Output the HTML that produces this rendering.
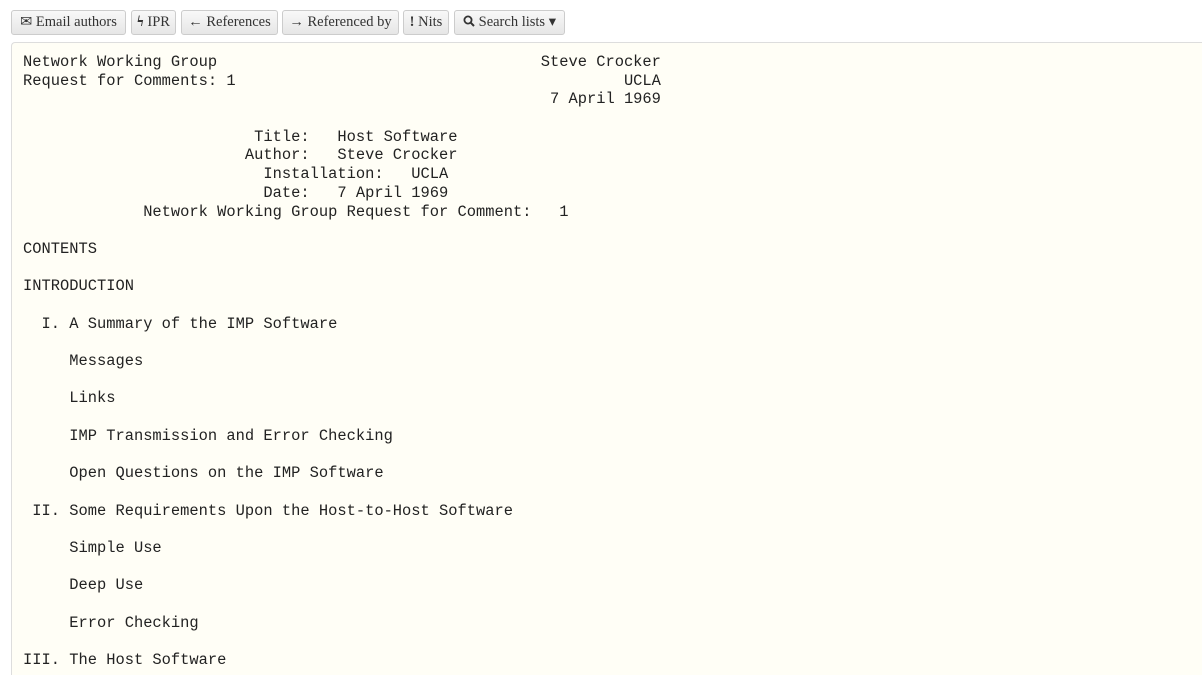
<!DOCTYPE html>
<html><head><meta charset="utf-8"><style>
html,body{margin:0;background:#fff;width:1202px;height:675px;overflow:hidden}
body{position:relative;font-family:"Liberation Serif",serif}
.b{position:absolute;top:10px;height:25px;box-sizing:border-box;border:1px solid #ccc;border-radius:3px;background:linear-gradient(#f8f8f8,#e6e6e6);font-size:14.5px;color:#333;line-height:23px;text-align:center;white-space:nowrap}
.box{position:absolute;left:11px;top:42px;width:1191px;height:633px;box-sizing:border-box;border:1px solid #ddd;border-right:none;border-bottom:none;border-radius:4px 0 0 0;background:#fffef6}
pre{position:absolute;left:23px;top:53px;margin:0;font-family:"Liberation Mono",monospace;font-size:15.42px;line-height:18.68px;color:#222}
</style></head><body>
<div class="b" style="left:11px;width:115px">&#9993; Email authors</div>
<div class="b" style="left:131px;width:45px"><b>ϟ</b> IPR</div>
<div class="b" style="left:181px;width:97px">&#8592; References</div>
<div class="b" style="left:282px;width:117px">&#8594; Referenced by</div>
<div class="b" style="left:403px;width:46px"><b>!</b> Nits</div>
<div class="b" style="left:454px;width:111px"><svg width="12" height="12" viewBox="0 0 12 12" style="vertical-align:-1px"><circle cx="5" cy="5" r="3.6" fill="none" stroke="#333" stroke-width="1.8"/><path d="M7.6 7.6L11 11" stroke="#333" stroke-width="2"/></svg> Search lists &#9662;</div>
<div class="box"></div>
<pre>Network Working Group                                   Steve Crocker
Request for Comments: 1                                          UCLA
                                                         7 April 1969

                         Title:   Host Software
                        Author:   Steve Crocker
                          Installation:   UCLA
                          Date:   7 April 1969
             Network Working Group Request for Comment:   1

CONTENTS

INTRODUCTION

  I. A Summary of the IMP Software

     Messages

     Links

     IMP Transmission and Error Checking

     Open Questions on the IMP Software

 II. Some Requirements Upon the Host-to-Host Software

     Simple Use

     Deep Use

     Error Checking

III. The Host Software</pre>
</body></html>
